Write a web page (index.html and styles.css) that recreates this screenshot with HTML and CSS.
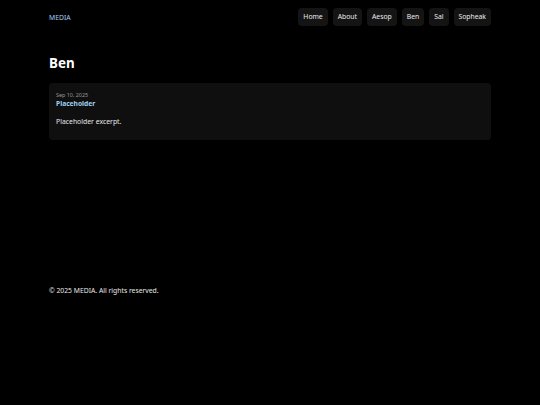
FILE: index.html
```html
<!DOCTYPE html>
<html lang="en">
<head>
<meta charset="utf-8">
<title>Ben - MEDIA</title>
<link rel="stylesheet" href="styles.css">
</head>
<body>
<header class="site-header">
  <div class="container header-inner">
    <a class="brand" href="#">MEDIA</a>
    <nav class="nav">
      <a href="#">Home</a>
      <a href="#">About</a>
      <a href="#">Aesop</a>
      <a href="#">Ben</a>
      <a href="#">Sal</a>
      <a href="#">Sopheak</a>
    </nav>
  </div>
</header>
<main class="container main">
  <h1 class="page-title">Ben</h1>
  <article class="card">
    <div class="date">Sep 10, 2025</div>
    <a class="post-title" href="#">Placeholder</a>
    <p class="excerpt">Placeholder excerpt.</p>
  </article>
</main>
<footer class="container footer">
  <p>© 2025 MEDIA. All rights reserved.</p>
</footer>
</body>
</html>
```
FILE: styles.css
```css
html, body {
  margin: 0;
  padding: 0;
  background: #000;
  color: #e8e8e8;
  font-family: "Noto Sans", "Open Sans", sans-serif;
  font-size: 6.8px;
}
a { text-decoration: none; }
.container {
  max-width: 442px;
  margin: 0 auto;
}
.header-inner {
  display: flex;
  justify-content: space-between;
  align-items: center;
  padding-top: 8px;
  height: 18px;
}
.brand {
  color: #a2d2f2;
  font-size: 6.8px;
}
.nav {
  display: flex;
  gap: 5px;
}
.nav a {
  color: #ececec;
  background: #141414;
  border-radius: 4px;
  padding: 0 5px;
  height: 18px;
  line-height: 18px;
  font-size: 6.8px;
}
.main {
  padding-top: 27px;
}
.page-title {
  margin: 0 0 10px;
  font-size: 13.4px;
  line-height: 20px;
  font-weight: 700;
  color: #fff;
}
.card {
  background: #0f0f0f;
  border-radius: 4px;
  padding: 8px 7px 13px;
}
.date {
  color: #9a9a9a;
  font-size: 5.4px;
  line-height: 8px;
}
.post-title {
  display: block;
  color: #a0d0f0;
  font-weight: 700;
  font-size: 6.7px;
  line-height: 10px;
}
.excerpt {
  margin: 8px 0 0;
  font-size: 6.85px;
  line-height: 10px;
  color: #e8e8e8;
}
.footer {
  margin-top: 146px;
}
.footer p {
  margin: 0;
  font-size: 6.8px;
  line-height: 10px;
  color: #e8e8e8;
}
```
